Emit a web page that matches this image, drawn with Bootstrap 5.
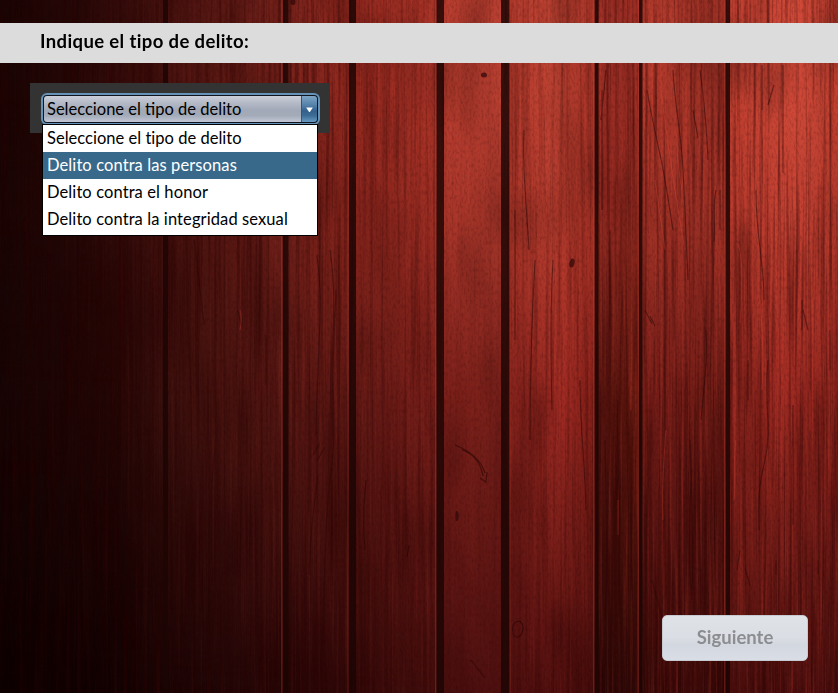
<!DOCTYPE html>
<html lang="es">
<head>
<meta charset="utf-8">
<meta name="viewport" content="width=device-width, initial-scale=1">
<title>Tipo de delito</title>
<link href="https://cdn.jsdelivr.net/npm/bootstrap@5.3.0/dist/css/bootstrap.min.css" rel="stylesheet">
<style>
body{font-family:Lato,"Liberation Sans",sans-serif;background:#1a0605;color:#000;font-size:16.5px;line-height:27px}
.wood{z-index:-1}
.screen{height:693px;padding-top:23px}
.title-bar{height:40px;padding-left:40px;background:#dcdcdc;font-size:18.5px;line-height:37px;letter-spacing:.38px}
.combo-panel{width:300px;height:50px;margin:20px 0 0 30px;padding:10px 10.5px 0;background:#333;box-sizing:border-box}
.combo{height:32px;border:2px solid #6592b7;border-radius:6px;background:#10141d;padding:1px;color:#000;line-height:27px}
.combo-label{padding-left:3.5px;border-radius:3px 0 0 3px;background:linear-gradient(#cbcfda 0,#b6bbc8 25%,#a1a8b7 55%,#a3aab8 75%,#c2c7d6 100%)}
.combo-arrow{width:16px;border-left:1px solid #315778;border-radius:0 3px 3px 0;background:linear-gradient(#7fa5c5 0,#5482aa 35%,#34618b 58%,#3c6b95 75%,#659ac4 100%)}
.options{top:41px;left:12px;width:276px;height:112px;border:1px solid #000;background:#fff;letter-spacing:.1px}
.options .list-group-item{height:27px;padding:0 4px;border:0;color:#000;background:#fff;line-height:26px}
.options .list-group-item.active{background:#39698a;color:#fff;margin:0}
.options .first-option{letter-spacing:.02px}
.next-btn{width:146px;height:46px;margin:0 30px 32px;padding:0;border:1px solid #c6c9d0;border-radius:5px;background:linear-gradient(#dfe2e7 0,#dadde3 50%,#d3d7df 65%,#d9dde5 100%);font-size:18.5px;line-height:41px;padding-bottom:2px}
.next-btn:disabled{color:#8b8d91;opacity:1;border-color:#c6c9d0}
</style>
</head>
<body>
<svg class="wood position-fixed top-0 start-0" width="838" height="693" viewBox="0 0 838 693" aria-hidden="true">
<defs>
<linearGradient id="top" gradientUnits="userSpaceOnUse" x1="0" x2="838" y1="0" y2="0">
<stop offset="0" stop-color="#190605"/><stop offset=".093" stop-color="#260908"/><stop offset=".195" stop-color="#43110e"/><stop offset=".27" stop-color="#5c1914"/><stop offset=".338" stop-color="#75221b"/><stop offset=".42" stop-color="#92291f"/><stop offset=".52" stop-color="#aa3428"/><stop offset=".531" stop-color="#b93e30"/><stop offset=".6" stop-color="#b94032"/><stop offset=".61" stop-color="#b23b2d"/><stop offset=".66" stop-color="#c04434"/><stop offset=".709" stop-color="#ac3629"/><stop offset=".714" stop-color="#962c23"/><stop offset=".763" stop-color="#9d2f25"/><stop offset=".768" stop-color="#b33b2d"/><stop offset=".864" stop-color="#a63529"/><stop offset=".872" stop-color="#bd3f30"/><stop offset=".95" stop-color="#ce4a39"/><stop offset="1" stop-color="#bb3f30"/>
</linearGradient>
<linearGradient id="mid" gradientUnits="userSpaceOnUse" x1="0" x2="838" y1="0" y2="0">
<stop offset="0" stop-color="#160505"/><stop offset=".14" stop-color="#220706"/><stop offset=".2" stop-color="#39100d"/><stop offset=".338" stop-color="#541713"/><stop offset=".42" stop-color="#5c1814"/><stop offset=".52" stop-color="#791f1a"/><stop offset=".57" stop-color="#7e221c"/><stop offset=".6" stop-color="#711e19"/><stop offset=".61" stop-color="#82221c"/><stop offset=".67" stop-color="#a12c24"/><stop offset=".709" stop-color="#832019"/><stop offset=".714" stop-color="#571510"/><stop offset=".763" stop-color="#65190f"/><stop offset=".768" stop-color="#741d18"/><stop offset=".864" stop-color="#651914"/><stop offset=".872" stop-color="#88241d"/><stop offset=".93" stop-color="#9d2a22"/><stop offset="1" stop-color="#8b241d"/>
</linearGradient>
<linearGradient id="low" gradientUnits="userSpaceOnUse" x1="0" x2="838" y1="0" y2="0">
<stop offset="0" stop-color="#0b0202"/><stop offset=".15" stop-color="#120303"/><stop offset=".27" stop-color="#200607"/><stop offset=".4" stop-color="#2d0808"/><stop offset=".5" stop-color="#3c0c0b"/><stop offset=".56" stop-color="#4b1010"/><stop offset=".66" stop-color="#4d0f0e"/><stop offset=".709" stop-color="#400c0b"/><stop offset=".714" stop-color="#280706"/><stop offset=".763" stop-color="#2c0807"/><stop offset=".8" stop-color="#3b0b0a"/><stop offset=".864" stop-color="#330908"/><stop offset=".872" stop-color="#4b100e"/><stop offset="1" stop-color="#480f0e"/>
</linearGradient>
<linearGradient id="fm" gradientUnits="userSpaceOnUse" x1="0" x2="0" y1="100" y2="400"><stop stop-color="#000"/><stop offset=".45" stop-color="#4c4c4c"/><stop offset="1" stop-color="#fff"/></linearGradient>
<linearGradient id="fl" gradientUnits="userSpaceOnUse" x1="0" x2="0" y1="400" y2="700"><stop stop-color="#000"/><stop offset="1" stop-color="#fff"/></linearGradient>
<mask id="mm"><rect width="838" height="693" fill="url(#fm)"/></mask>
<mask id="ml"><rect width="838" height="693" fill="url(#fl)"/></mask>
<filter id="grain" x="0" y="0" width="1" height="1" color-interpolation-filters="sRGB"><feTurbulence type="fractalNoise" baseFrequency=".27 .005" numOctaves="3" seed="8"/><feColorMatrix values="0 0 0 0 .16  0 0 0 0 .01  0 0 0 0 .01  2.6 0 0 0 -1.15"/></filter>
<filter id="shine" x="0" y="0" width="1" height="1" color-interpolation-filters="sRGB"><feTurbulence type="fractalNoise" baseFrequency=".33 .006" numOctaves="3" seed="23"/><feColorMatrix values="0 0 0 0 .92  0 0 0 0 .3  0 0 0 0 .23  2.2 0 0 0 -1.05"/></filter>
<filter id="blotch" x="0" y="0" width="1" height="1" color-interpolation-filters="sRGB"><feTurbulence type="fractalNoise" baseFrequency=".022 .008" numOctaves="2" seed="5"/><feColorMatrix values="0 0 0 0 .1  0 0 0 0 0  0 0 0 0 0  2.6 0 0 0 -1.25"/></filter>
<filter id="speck" x="0" y="0" width="1" height="1" color-interpolation-filters="sRGB"><feTurbulence type="fractalNoise" baseFrequency=".5 .22" numOctaves="2" seed="3"/><feColorMatrix values="0 0 0 0 .12  0 0 0 0 0  0 0 0 0 0  2.4 0 0 0 -1.05"/></filter>
<linearGradient id="lit"><stop stop-color="#fff" stop-opacity=".05"/><stop offset=".4" stop-color="#fff" stop-opacity=".35"/><stop offset="1" stop-color="#fff"/></linearGradient>
<mask id="right"><rect width="838" height="693" fill="url(#lit)"/></mask>
<mask id="rough"><rect width="838" height="693" fill="#fff"/><rect x="444" width="57" height="693" fill="#333"/><rect x="509" width="85" height="693" fill="#999"/><rect x="356" width="80" height="693" fill="#aaa"/></mask>
</defs>
<rect width="838" height="693" fill="url(#top)"/>
<rect width="838" height="693" fill="url(#mid)" mask="url(#mm)"/>
<rect width="838" height="693" fill="url(#low)" mask="url(#ml)"/>
<rect width="838" height="693" filter="url(#blotch)" opacity=".25"/>
<g mask="url(#rough)"><rect width="838" height="693" filter="url(#grain)" opacity=".5"/>
<g mask="url(#right)"><rect width="838" height="693" filter="url(#shine)" opacity=".35"/></g></g>
<rect width="838" height="693" filter="url(#speck)" opacity=".18"/>
<g fill="none" stroke="#2a0605" stroke-opacity=".5" stroke-width="1.1">
<path d="M194 240c4 30 6 50 10 85M317 255c5 40 3 60 2 90s-3 70-3 90M330 250c7 45 2 90 3 130s2 70-3 100-4 80-10 213M336 290c-2 50-5 100-3 150M313 455l7-12m-3 18l8-14m-7 28c-4 30-7 50-9 100"/>
<path d="M215 450c-5 40-3 60-4 110M266 335v50M238 310l3 16M186 570v20M214 565l-2 15M256 560v16"/>
<path d="M524 130c-2 40 3 80 5 120M553 260c-3 50-2 110-1 150M535 260c-4 70-5 120-5 180M515 210v130M580 380c0 50 5 80 6 130"/>
<path d="M647 90c5 30 9 45 12 60 6 25 9 50 14 80M673 70c1 30 8 60 10 100 2 40 3 60 5 110M700 70c4 30 7 60 8 90M716 190c-4 20 0 36-2 52M720 190v40M693 110l5 28M645 310l7 14m-2-8l5 10M706 330c2 30-2 55-5 90M690 440c2 50 4 100 2 150M652 580l10 38M692 470c-5 60-3 100 0 130"/>
<path d="M762 65v45M783 65v108M774 85l-6 20M756 190c0 50 8 70 8 110M768 360c-4 40 4 70-3 100s-7 40-6 70M803 310l5 20M802 300v30M793 405v120M740 550l-3 20M745 568l5 18M776 560v15M818 560v14M830 330v40M748 360v40"/>
<path d="M602 90v120M610 230v100M618 400c-2 30 2 60 0 90M605 440c1 60 4 100 0 180M631 410v180M606 70l-5 50"/>
<path d="M455 445c10 4 25 12 30 28M462 450c10 3 18 10 21 26M480 478l6 4 1-10M471 660l14 18M409 545l-2 12M366 480c-2 20-3 50-1 70M513 625c5-8 14-2 8 10-8 7-9-4-8-10" stroke-opacity=".65"/>
</g>
<g fill="none" stroke="#e64b3a" stroke-opacity=".28"><path d="M661 90c6 50 15 110 24 160M676 130c1 20 2 40 6 60M655 180l10 70M736 243c8 2 6 60 4 80M726 130v230M703 60v50M618 500v35M736 440c-3 20 0 40-2 60M760 300c4 50 3 70 2 90M810 390v40M647 60v45M240 310c2 8 1 12 0 20M666 430c-3 40-4 60-3 90"/></g>
<g fill="#330908" fill-opacity=".75"><ellipse cx="484" cy="75" rx="3" ry="2.5"/><ellipse cx="572" cy="263" rx="2.5" ry="4.5" transform="rotate(15 572 263)"/><ellipse cx="457" cy="516" rx="1.700" ry="5"/><ellipse cx="292" cy="603" rx="2" ry="3"/><ellipse cx="293" cy="2" rx="2.5" ry="3"/></g>
<g fill="#1b0504" fill-opacity=".82">
<rect x="77" width="2" height="693" fill-opacity=".45"/><rect x="163" width="5" height="693"/><rect x="283" width="5.5" height="693"/><rect x="349" width="7" height="693"/><rect x="436.500" width="7.500" height="693"/><rect x="501" width="8.500" height="693"/><rect x="594.500" width="4" height="693"/><rect x="639" width="3.500" height="693"/><rect x="725.500" width="4.500" height="693"/>
</g>
<g fill="#cf4132" fill-opacity=".3"><rect x="281" width="1.500" height="693"/><rect x="347.500" width="1" height="693"/><rect x="435" width="1.300" height="693"/><rect x="509.500" width="1" height="693"/><rect x="593" width="1.500" height="693"/><rect x="637.500" width="1.500" height="693"/><rect x="724" width="1.500" height="693"/></g>
</svg>
<main class="screen d-flex flex-column">
<h1 class="title-bar fw-bold m-0">Indique el tipo de delito:</h1>
<div class="combo-panel dropdown">
<div class="combo d-flex" role="combobox" aria-expanded="true" aria-controls="crime-list">
<span class="combo-label flex-grow-1">Seleccione el tipo de delito</span>
<span class="combo-arrow d-flex align-items-center justify-content-center"><svg width="7" height="5" viewBox="0 0 8 6"><path d="M0 .5h8L4.500 6h-1z" fill="#fff"/></svg></span>
</div>
<ul id="crime-list" class="options list-group rounded-0 position-absolute" role="listbox">
<li class="list-group-item first-option">Seleccione el tipo de delito</li>
<li class="list-group-item active">Delito contra las personas</li>
<li class="list-group-item">Delito contra el honor</li>
<li class="list-group-item">Delito contra la integridad sexual</li>
</ul>
</div>
<button class="next-btn btn fw-bold mt-auto align-self-end" type="button" disabled>Siguiente</button>
</main>
<script src="https://cdn.jsdelivr.net/npm/bootstrap@5.3.0/dist/js/bootstrap.bundle.min.js"></script>
</body>
</html>
